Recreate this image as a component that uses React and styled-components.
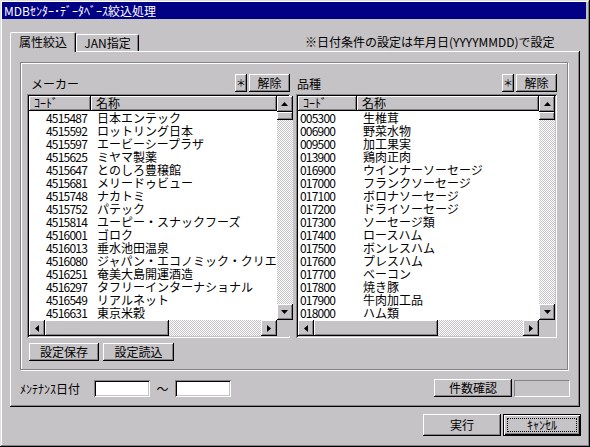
import React from "react";
import styled, { createGlobalStyle, css } from "styled-components";

// colores de la ventana clasica
const gris = "#c6c3c6";
const grisOscuro = "#848284";
const azul = "#000084";

const GlobalStyle = createGlobalStyle`
  html, body { margin: 0; padding: 0; background: ${gris}; }
  body {
    font-family: "Noto Sans CJK JP", "Noto Sans", sans-serif;
    font-size: 12px;
    color: #000;
  }
  * { box-sizing: border-box; }
`;

const raised = css`
  box-shadow: inset -1px -1px #000, inset 1px 1px #fff, inset -2px -2px ${grisOscuro};
`;

const sunken = css`
  box-shadow: inset 1px 1px ${grisOscuro}, inset -1px -1px #fff,
    inset 2px 2px #000, inset -2px -2px ${gris};
`;

const dither = css`
  background-color: #fff;
  background-image: conic-gradient(${gris} 25%, #fff 0 50%, ${gris} 0 75%, #fff 0);
  background-size: 2px 2px;
`;

const Window = styled.div`
  width: 590px;
  height: 447px;
  background: ${gris};
  padding: 2px 4px 2px 2px;
  display: flex;
  flex-direction: column;
  box-shadow: inset -1px -1px #000, inset 1px 1px #dfdfdf,
    inset -2px -2px ${grisOscuro}, inset 2px 2px #fff;
`;

const TitleBar = styled.div`
  height: 17px;
  line-height: 17px;
  padding-left: 2px;
  background: ${azul};
  color: #fff;
  white-space: nowrap;
`;

const TabRow = styled.div`
  display: flex;
  align-items: flex-end;
  height: 19px;
  margin-top: 13px;
  padding-left: 8px;
`;

const Tab = styled.div`
  position: relative;
  z-index: 1;
  width: ${(p) => p.$w}px;
  height: ${(p) => (p.$active ? 20 : 17)}px;
  margin-bottom: ${(p) => (p.$active ? -1 : 0)}px;
  background: ${gris};
  border-top: 1px solid #fff;
  border-left: 1px solid #fff;
  border-right: 1px solid #000;
  border-radius: 2px 2px 0 0;
  box-shadow: inset -1px 0 ${grisOscuro};
  display: flex;
  justify-content: center;
  align-items: ${(p) => (p.$active ? "flex-start" : "center")};
  padding-top: ${(p) => (p.$active ? 1 : 0)}px;
  line-height: 16px;
  white-space: nowrap;
`;

const Note = styled.div`
  align-self: center;
  margin-left: 166px;
  line-height: 19px;
  white-space: nowrap;
`;

const Panel = styled.div`
  margin-left: 8px;
  width: 570px;
  height: 356px;
  padding: 11px 10px 0 10px;
  display: flex;
  flex-direction: column;
  ${raised};
`;

const GroupBox = styled.div`
  width: 548px;
  height: 308px;
  border: 1px solid ${grisOscuro};
  box-shadow: inset 1px 1px #fff, 1px 1px #fff;
  padding: 11px 0 0 6px;
  display: flex;
  flex-direction: column;
`;

const Columns = styled.div`
  display: flex;
  gap: 6px;
`;

const Column = styled.div`
  width: ${(p) => p.$w}px;
  display: flex;
  flex-direction: column;
`;

const ColumnHead = styled.div`
  height: 18px;
  display: flex;
  align-items: center;
  gap: 2px;
`;

const Label = styled.span`
  flex: 1;
  padding-left: ${(p) => p.$pad}px;
  white-space: nowrap;
`;

const Button = styled.button`
  font: inherit;
  font-size: ${(p) => p.$fs || 12}px;
  color: #000;
  background: ${gris};
  border: 0;
  padding: 0;
  width: ${(p) => p.$w}px;
  height: ${(p) => p.$h || 18}px;
  line-height: ${(p) => (p.$h || 18) - 2}px;
  white-space: nowrap;
  ${raised};
`;

const DefaultButton = styled(Button)`
  display: flex;
  box-shadow: inset 0 0 0 1px #000, inset 2px 2px #fff, inset -2px -2px #000,
    inset -3px -3px ${grisOscuro};
`;

const FocusRing = styled.span`
  flex: 1;
  margin: 4px;
  border: 1px dotted #000;
  display: flex;
  align-items: center;
  justify-content: center;
  line-height: 12px;
`;

const ListBox = styled.div`
  margin-top: 2px;
  height: 244px;
  padding: 2px;
  display: grid;
  grid-template-columns: 1fr 16px;
  grid-template-rows: 224px 16px;
  background: ${gris};
  ${sunken};
`;

const ListContent = styled.div`
  background: #fff;
`;

const HeaderRow = styled.div`
  display: flex;
  height: 15px;
  background: ${gris};
`;

const HeaderCell = styled.div`
  flex: ${(p) => (p.$w ? `0 0 ${p.$w}px` : "1")};
  height: 15px;
  line-height: 14px;
  padding-left: 5px;
  white-space: nowrap;
  ${raised};
`;

const Row = styled.div`
  display: flex;
  height: 13px;
  line-height: 13px;
  white-space: nowrap;
`;

const CodeCell = styled.div`
  flex: 0 0 ${(p) => p.$w}px;
  text-align: ${(p) => p.$align};
  padding: ${(p) => (p.$align === "right" ? "0 4px 0 0" : "0 0 0 2px")};
  letter-spacing: -0.8px;
`;

const NameCell = styled.div`
  flex: 1;
  padding-left: 6px;
`;

const VScroll = styled.div`
  position: relative;
  display: flex;
  flex-direction: column;
  ${dither};
`;

const HScroll = styled.div`
  display: flex;
  ${dither};
`;

const ArrowBtn = styled.div`
  flex: 0 0 16px;
  width: 16px;
  height: 16px;
  background: ${gris};
  display: flex;
  align-items: center;
  justify-content: center;
  ${raised};
`;

const Thumb = styled.div`
  background: ${gris};
  ${(p) => (p.$vertical ? "height: 8px; width: 16px;" : `width: ${p.$w}px; height: 16px;`)}
  ${raised};
`;

const Track = styled.div`
  flex: 1;
`;

const Corner = styled.div`
  background: ${gris};
`;

const ButtonRow = styled.div`
  display: flex;
  gap: 4px;
  margin-top: 5px;
  padding-left: 2px;
`;

const DateRow = styled.div`
  display: flex;
  align-items: center;
  height: 18px;
  margin-top: 9px;
`;

const DateLabel = styled.span`
  width: 74px;
  white-space: nowrap;
`;

const Field = styled.div`
  width: 56px;
  height: 17px;
  background: #fff;
  ${sunken};
`;

const Tilde = styled.span`
  width: 25px;
  text-align: center;
`;

const CountBox = styled.div`
  width: 56px;
  height: 17px;
  margin-left: 2px;
  border-top: 1px solid ${grisOscuro};
  border-left: 1px solid ${grisOscuro};
  border-right: 1px solid #fff;
  border-bottom: 1px solid #fff;
`;

const Spacer = styled.div`
  flex: 1;
`;

const FooterRow = styled.div`
  display: flex;
  justify-content: flex-end;
  gap: 2px;
  margin-top: 7px;
  padding-right: 5px;
`;

const Arrow = ({ dir }) => {
  const vertical = dir === "up" || dir === "down";
  const pts = {
    up: "3.5,0 7,4 0,4",
    down: "0,0 7,0 3.5,4",
    left: "4,0 4,7 0,3.5",
    right: "0,0 4,3.5 0,7",
  }[dir];
  return (
    <svg
      width={vertical ? 7 : 4}
      height={vertical ? 4 : 7}
      viewBox={vertical ? "0 0 7 4" : "0 0 4 7"}
    >
      <polygon points={pts} fill="#000" />
    </svg>
  );
};

const makers = [
  ["4515487", "日本エンテック"],
  ["4515592", "ロットリング日本"],
  ["4515597", "エービーシープラザ"],
  ["4515625", "ミヤマ製薬"],
  ["4515647", "とのしろ豊穣館"],
  ["4515681", "メリードゥビュー"],
  ["4515748", "ナカトミ"],
  ["4515752", "パテック"],
  ["4515814", "ユーピー・スナックフーズ"],
  ["4516001", "ゴロク"],
  ["4516013", "垂水池田温泉"],
  ["4516080", "ジャパン・エコノミック・クリエ"],
  ["4516251", "奄美大島開運酒造"],
  ["4516297", "タフリーインターナショナル"],
  ["4516549", "リアルネット"],
  ["4516631", "東京米穀"],
];

const hinshu = [
  ["005300", "生椎茸"],
  ["006900", "野菜水物"],
  ["009500", "加工果実"],
  ["013900", "鶏肉正肉"],
  ["016900", "ウインナーソーセージ"],
  ["017000", "フランクソーセージ"],
  ["017100", "ボロナソーセージ"],
  ["017200", "ドライソーセージ"],
  ["017300", "ソーセージ類"],
  ["017400", "ロースハム"],
  ["017500", "ボンレスハム"],
  ["017600", "プレスハム"],
  ["017700", "ベーコン"],
  ["017800", "焼き豚"],
  ["017900", "牛肉加工品"],
  ["018000", "ハム類"],
];

const ListView = ({ rows, codeWidth, codeAlign, thumbWidth }) => (
  <ListBox>
    <ListContent>
      <HeaderRow>
        <HeaderCell $w={codeWidth}>ｺｰﾄﾞ</HeaderCell>
        <HeaderCell>名称</HeaderCell>
      </HeaderRow>
      {rows.map(([code, name]) => (
        <Row key={code}>
          <CodeCell $w={codeWidth} $align={codeAlign}>
            {code}
          </CodeCell>
          <NameCell>{name}</NameCell>
        </Row>
      ))}
    </ListContent>
    <VScroll>
      <ArrowBtn>
        <Arrow dir="up" />
      </ArrowBtn>
      <Thumb $vertical />
      <Track />
      <ArrowBtn>
        <Arrow dir="down" />
      </ArrowBtn>
    </VScroll>
    <HScroll>
      <ArrowBtn>
        <Arrow dir="left" />
      </ArrowBtn>
      <Thumb $w={thumbWidth} />
      <Track />
      <ArrowBtn>
        <Arrow dir="right" />
      </ArrowBtn>
    </HScroll>
    <Corner />
  </ListBox>
);

const App = () => {
  return (
    <>
      <GlobalStyle />
      <Window>
        <TitleBar>MDBｾﾝﾀｰ･ﾃﾞｰﾀﾍﾞｰｽ絞込処理</TitleBar>
        <TabRow>
          <Tab $active $w={66}>
            属性絞込
          </Tab>
          <Tab $w={63}>JAN指定</Tab>
          <Note>※日付条件の設定は年月日(YYYYMMDD)で設定</Note>
        </TabRow>
        <Panel>
          <GroupBox>
            <Columns>
              <Column $w={263}>
                <ColumnHead>
                  <Label $pad={4}>メーカー</Label>
                  <Button $w={12} $fs={10}>＊</Button>
                  <Button $w={41}>解除</Button>
                </ColumnHead>
                <ListView rows={makers} codeWidth={62} codeAlign="right" thumbWidth={124} />
              </Column>
              <Column $w={261}>
                <ColumnHead>
                  <Label $pad={1}>品種</Label>
                  <Button $w={12} $fs={10}>＊</Button>
                  <Button $w={41}>解除</Button>
                </ColumnHead>
                <ListView rows={hinshu} codeWidth={59} codeAlign="left" thumbWidth={124} />
              </Column>
            </Columns>
            <ButtonRow>
              <Button $w={70}>設定保存</Button>
              <Button $w={71}>設定読込</Button>
            </ButtonRow>
          </GroupBox>
          <DateRow>
            <DateLabel>ﾒﾝﾃﾅﾝｽ日付</DateLabel>
            <Field />
            <Tilde>～</Tilde>
            <Field />
            <Spacer />
            <Button $w={78}>件数確認</Button>
            <CountBox />
          </DateRow>
        </Panel>
        <FooterRow>
          <Button $w={78} $h={22}>
            実行
          </Button>
          <DefaultButton $w={78} $h={22}>
            <FocusRing>ｷｬﾝｾﾙ</FocusRing>
          </DefaultButton>
        </FooterRow>
      </Window>
    </>
  );
};

export default App;
